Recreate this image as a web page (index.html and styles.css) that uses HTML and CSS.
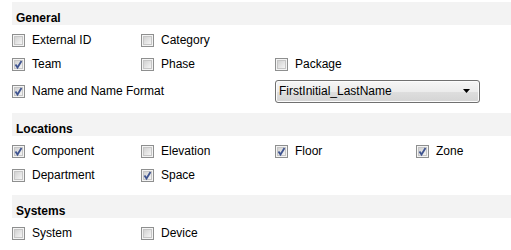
FILE: index.html
```html
<!DOCTYPE html>
<html>
<head>
<meta charset="utf-8">
<link rel="stylesheet" href="styles.css">
</head>
<body>
<svg width="0" height="0" class="defs">
  <defs>
    <linearGradient id="cbfill" x1="0" y1="0" x2="1" y2="1">
      <stop offset="0" stop-color="#cfcfcf"/>
      <stop offset="1" stop-color="#f7f7f7"/>
    </linearGradient>
    <symbol id="cb" viewBox="0 0 13 13">
      <rect x="0.5" y="0.5" width="12" height="12" fill="#f4f4f4" stroke="#8e8f8f"/>
      <rect x="2.5" y="2.5" width="8" height="8" fill="url(#cbfill)" stroke="#c6c6c6"/>
    </symbol>
    <symbol id="cbc" viewBox="0 0 13 13">
      <rect x="0.5" y="0.5" width="12" height="12" fill="#f4f4f4" stroke="#8e8f8f"/>
      <rect x="2.5" y="2.5" width="8" height="8" fill="url(#cbfill)" stroke="#c6c6c6"/>
      <path d="M3.5 6.5 L5.5 9.5 L9.5 3" fill="none" stroke="#3f5490" stroke-width="1.8"/>
    </symbol>
  </defs>
</svg>

<section class="section">
  <div class="band">General</div>
  <div class="grid grid-general">
    <label class="item"><svg class="box"><use href="#cb"/></svg>External ID</label>
    <label class="item"><svg class="box"><use href="#cb"/></svg>Category</label>
    <span></span><span></span>
    <label class="item"><svg class="box"><use href="#cbc"/></svg>Team</label>
    <label class="item"><svg class="box"><use href="#cb"/></svg>Phase</label>
    <label class="item"><svg class="box"><use href="#cb"/></svg>Package</label>
    <span></span>
    <label class="item span2"><svg class="box"><use href="#cbc"/></svg>Name and Name Format</label>
    <div class="select-cell span2">
      <div class="select"><span>FirstInitial_LastName</span><svg class="arrow" width="7" height="4" viewBox="0 0 7 4"><path d="M0 0 H7 L3.5 4 Z" fill="#000"/></svg></div>
    </div>
  </div>
</section>

<section class="section s2">
  <div class="band">Locations</div>
  <div class="grid">
    <label class="item"><svg class="box"><use href="#cbc"/></svg>Component</label>
    <label class="item"><svg class="box"><use href="#cb"/></svg>Elevation</label>
    <label class="item"><svg class="box"><use href="#cbc"/></svg>Floor</label>
    <label class="item"><svg class="box"><use href="#cbc"/></svg>Zone</label>
    <label class="item"><svg class="box"><use href="#cb"/></svg>Department</label>
    <label class="item"><svg class="box"><use href="#cbc"/></svg>Space</label>
  </div>
</section>

<section class="section s3">
  <div class="band">Systems</div>
  <div class="grid">
    <label class="item"><svg class="box"><use href="#cb"/></svg>System</label>
    <label class="item"><svg class="box"><use href="#cb"/></svg>Device</label>
  </div>
</section>
</body>
</html>
```

FILE: styles.css
```css
html, body {
  margin: 0;
  padding: 0;
  background: #ffffff;
}
body {
  width: 511px;
  height: 250px;
  overflow: hidden;
  padding-top: 2px;
  box-sizing: border-box;
  font-family: "Liberation Sans", Arial, sans-serif;
  font-size: 12px;
  color: #000;
}
.defs {
  position: absolute;
  width: 0;
  height: 0;
}
.section {
  margin-left: 12px;
}
.s2 {
  margin-top: 7px;
}
.s3 {
  margin-top: 8px;
}
.band {
  height: 23px;
  background: #f3f3f3;
  font-weight: bold;
  line-height: 14px;
  display: flex;
  align-items: flex-end;
  padding-left: 4px;
  box-sizing: border-box;
}
.grid {
  display: grid;
  grid-template-columns: 129px 134px 141px 1fr;
  grid-auto-rows: 24px;
  margin-top: 3px;
}
.grid-general {
  grid-template-rows: 24px 24px 30px;
}
.item {
  display: flex;
  align-items: center;
  gap: 7px;
  white-space: nowrap;
}
.box {
  width: 13px;
  height: 13px;
  flex: none;
}
.span2 {
  grid-column: span 2;
}
.select-cell {
  display: flex;
  align-items: center;
}
.select {
  width: 205px;
  height: 23px;
  box-sizing: border-box;
  border: 1px solid #707070;
  border-radius: 3px;
  background: linear-gradient(#f6f6f6 0%, #ececec 50%, #dedede 51%, #d4d4d4 100%);
  display: flex;
  align-items: center;
  justify-content: space-between;
  padding: 0 9px 0 3px;
  box-shadow: inset 0 0 0 1px #fcfcfc;
}
.arrow {
  flex: none;
}
```
